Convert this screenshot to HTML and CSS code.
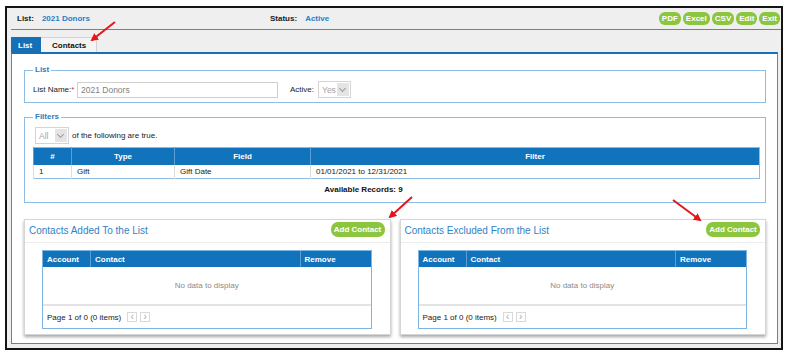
FILE: index.html
```html
<!DOCTYPE html>
<html lang="en">
<head>
    <meta charset="UTF-8">
    <title>List - 2021 Donors</title>
    <link rel="stylesheet" href="styles.css">
</head>
<body>
    <div class="frame">
        <div class="topbar">
            <div class="meta meta-list"><span class="lbl">List:</span><span class="val">2021 Donors</span></div>
            <div class="meta"><span class="lbl">Status:</span><span class="val">Active</span></div>
            <div class="actions">
                <button class="pill">PDF</button>
                <button class="pill">Excel</button>
                <button class="pill">CSV</button>
                <button class="pill">Edit</button>
                <button class="pill">Exit</button>
            </div>
        </div>

        <div class="tabs">
            <span class="tab active">List</span>
            <span class="tab">Contacts</span>
        </div>

        <div class="content">
            <fieldset class="group">
                <legend>List</legend>
                <div class="form-row">
                    <label class="field-label">List Name:<span class="req">*</span></label>
                    <input type="text" class="text-input" value="2021 Donors">
                    <label class="field-label active-label">Active:</label>
                    <div class="fake-select sel-yes"><span>Yes</span><i class="drop"></i></div>
                </div>
            </fieldset>

            <fieldset class="group filters">
                <legend>Filters</legend>
                <div class="match-row">
                    <div class="fake-select sel-all"><span>All</span><i class="drop"></i></div>
                    <span class="match-text">of the following are true.</span>
                </div>
                <table class="filter-table">
                    <thead>
                        <tr><th class="c-num">#</th><th class="c-type">Type</th><th class="c-field">Field</th><th>Filter</th></tr>
                    </thead>
                    <tbody>
                        <tr><td>1</td><td>Gift</td><td>Gift Date</td><td>01/01/2021 to 12/31/2021</td></tr>
                    </tbody>
                </table>
                <div class="records">Available Records: 9</div>
            </fieldset>

            <div class="panels">
                <section class="panel">
                    <div class="panel-head">
                        <h3 class="panel-title">Contacts Added To the List</h3>
                        <button class="pill add">Add Contact</button>
                    </div>
                    <div class="grid">
                        <table class="grid-table">
                            <thead>
                                <tr><th class="g-acc">Account</th><th>Contact</th><th class="g-rem">Remove</th></tr>
                            </thead>
                            <tbody>
                                <tr><td colspan="3" class="empty">No data to display</td></tr>
                            </tbody>
                        </table>
                        <div class="pager">Page 1 of 0 (0 items) <span class="pg">&lsaquo;</span><span class="pg">&rsaquo;</span></div>
                    </div>
                </section>
                <section class="panel">
                    <div class="panel-head">
                        <h3 class="panel-title">Contacts Excluded From the List</h3>
                        <button class="pill add">Add Contact</button>
                    </div>
                    <div class="grid">
                        <table class="grid-table">
                            <thead>
                                <tr><th class="g-acc">Account</th><th>Contact</th><th class="g-rem">Remove</th></tr>
                            </thead>
                            <tbody>
                                <tr><td colspan="3" class="empty">No data to display</td></tr>
                            </tbody>
                        </table>
                        <div class="pager">Page 1 of 0 (0 items) <span class="pg">&lsaquo;</span><span class="pg">&rsaquo;</span></div>
                    </div>
                </section>
            </div>
        </div>
    </div>

    <!-- annotation arrows drawn over the screenshot -->
    <svg class="notes" width="791" height="354" viewBox="0 0 791 354">
        <defs>
            <marker id="head" markerWidth="8" markerHeight="8" refX="6" refY="4" orient="auto" markerUnits="userSpaceOnUse">
                <path d="M0,0 L8,4 L0,8 Z" fill="#e3161d"/>
            </marker>
        </defs>
        <line x1="115" y1="22" x2="92" y2="40" stroke="#e3161d" stroke-width="2" marker-end="url(#head)"/>
        <line x1="412" y1="197" x2="390" y2="217" stroke="#e3161d" stroke-width="2" marker-end="url(#head)"/>
        <line x1="673" y1="200" x2="700" y2="220" stroke="#e3161d" stroke-width="2" marker-end="url(#head)"/>
    </svg>
</body>
</html>
```

FILE: styles.css
```css
body {
    margin: 0;
    padding: 6px 0 0 5px;
    background: #ffffff;
    font-family: "Liberation Sans", Arial, sans-serif;
    font-size: 8px;
    color: #111111;
    position: relative;
}

.frame {
    box-sizing: border-box;
    width: 778px;
    height: 344px;
    border: 2px solid #141414;
    background: #efefef;
}

/* top bar */
.topbar {
    display: flex;
    align-items: center;
    height: 21px;
    margin-left: 4px;
    padding-left: 6px;
    border-bottom: 1px solid #3d8fd2;
}
.meta {
    font-weight: bold;
}
.meta-list {
    width: 253px;
}
.meta .lbl {
    color: #1b1b1b;
    margin-right: 8px;
}
.meta .val {
    color: #2a7dc4;
}
.actions {
    margin-left: auto;
    margin-right: 1px;
    display: flex;
    gap: 2px;
}
.pill {
    font-family: "Liberation Sans", Arial, sans-serif;
    font-size: 8px;
    font-weight: bold;
    color: #ffffff;
    background: #8cc63f;
    border: none;
    border-radius: 6px;
    height: 13px;
    padding: 0 3px;
    line-height: 13px;
}

/* tabs */
.tabs {
    display: flex;
    margin: 7px 0 0 4px;
    height: 15px;
}
.tab {
    font-weight: bold;
    line-height: 15px;
    padding: 0 8px 0 11px;
    box-sizing: border-box;
    width: 56px;
    border-top: 1px solid #d2d2d2;
    border-right: 1px solid #d2d2d2;
    background: #f4f4f4;
}
.tab.active {
    width: 30px;
    padding-left: 7px;
    background: #1570b8;
    border-color: #1570b8;
    color: #ffffff;
}

/* main white box */
.content {
    box-sizing: border-box;
    width: 767px;
    height: 292px;
    margin-left: 4px;
    border: 1px solid #3d8fd2;
    border-top: 2px solid #1570b8;
    background: #ffffff;
    padding: 11px 11px 0 12px;
}

.group {
    margin: 0;
    padding: 6px 5px 4px 8px;
    border: 1px solid #8dbde6;
}
.group legend {
    font-weight: bold;
    color: #2a7dc4;
    line-height: 10px;
    padding: 0 2px;
}

.form-row {
    display: flex;
    align-items: center;
    height: 17px;
}
.field-label {
    color: #222222;
    width: 44px;
}
.req {
    color: #e02424;
}
.text-input {
    box-sizing: border-box;
    width: 201px;
    height: 16px;
    border: 1px solid #cfcfcf;
    padding: 0 3px;
    font-family: "Liberation Sans", Arial, sans-serif;
    font-size: 8.5px;
    color: #808080;
}
.active-label {
    margin: 0 4px 0 12px;
    width: 24px;
}

.fake-select {
    box-sizing: border-box;
    display: flex;
    align-items: center;
    height: 17px;
    border: 1px solid #d4d4d4;
    background: #ffffff;
    color: #a6a6a6;
    font-size: 8.5px;
    padding-left: 3px;
}
.fake-select span {
    flex: 1;
}
.fake-select .drop {
    position: relative;
    width: 12px;
    height: 13px;
    margin-right: 1px;
    background: #e4e4e4;
}
.fake-select .drop::after {
    content: "";
    position: absolute;
    left: 3px;
    top: 3px;
    width: 4px;
    height: 4px;
    border-right: 1px solid #9a9a9a;
    border-bottom: 1px solid #9a9a9a;
    transform: rotate(45deg);
}
.sel-yes {
    width: 33px;
}
.sel-all {
    width: 34px;
}

.filters {
    margin-top: 9px;
    padding-top: 5px;
    padding-bottom: 6px;
}
.match-row {
    display: flex;
    align-items: center;
    margin-left: 2px;
}
.match-text {
    margin-left: 3px;
    color: #222222;
}

.filter-table {
    width: 727px;
    margin-top: 3px;
    border-collapse: collapse;
    border: 1px solid #8dbde6;
}
.filter-table th {
    height: 17px;
    padding: 0;
    background: #1173bb;
    color: #ffffff;
    font-weight: bold;
    text-align: center;
    border-left: 1px solid #5b9fd6;
}
.filter-table td {
    height: 13px;
    padding: 0 0 0 5px;
    border-left: 1px solid #dddddd;
    color: #222222;
}
.filter-table .c-num { width: 37px; }
.filter-table .c-type { width: 102px; }
.filter-table .c-field { width: 135px; }

.records {
    margin-top: 5px;
    line-height: 12px;
    text-align: center;
    font-weight: bold;
    color: #111111;
    padding-right: 66px;
}

/* bottom panels */
.panels {
    display: flex;
    gap: 9px;
    margin-top: 16px;
}
.panel {
    box-sizing: border-box;
    flex: 1;
    height: 116px;
    background: #ffffff;
    border: 1px solid #d6d6d6;
    box-shadow: 0 2px 3px rgba(0, 0, 0, 0.35);
}
.panel-head {
    display: flex;
    justify-content: space-between;
    align-items: flex-start;
    height: 22px;
    border-bottom: 1px solid #ececec;
    padding: 0 5px 0 4px;
}
.panel-title {
    margin: 0;
    font-size: 10px;
    font-weight: normal;
    color: #2f82c6;
    line-height: 12px;
    padding-top: 5px;
}
.pill.add {
    height: 15px;
    line-height: 15px;
    border-radius: 7px;
    margin-top: 2px;
    padding: 0 3px;
    width: 54px;
}

.grid {
    margin: 7px 18px 0 17px;
    border: 1px solid #7eb4e2;
}
.grid-table {
    width: 100%;
    border-collapse: collapse;
}
.grid-table th {
    height: 16px;
    padding: 0 0 0 4px;
    background: #1173bb;
    color: #ffffff;
    font-weight: bold;
    text-align: left;
    border-left: 1px solid #5b9fd6;
}
.grid-table th:first-child {
    border-left: none;
}
.grid-table .g-acc { width: 43px; }
.grid-table .g-rem { width: 66px; }
.grid-table .empty {
    height: 37px;
    padding: 0;
    text-align: center;
    color: #8a8a8a;
}
.pager {
    display: flex;
    align-items: center;
    height: 22px;
    border-top: 2px solid #e3e3e3;
    padding-left: 4px;
    color: #222222;
}
.pg {
    box-sizing: border-box;
    width: 10px;
    height: 10px;
    margin-left: 3px;
    border: 1px solid #d9d9d9;
    color: #a8a8a8;
    font-size: 10px;
    line-height: 7px;
    text-align: center;
}
.pg:first-of-type {
    margin-left: 6px;
}

.notes {
    position: absolute;
    left: 0;
    top: 0;
    pointer-events: none;
}
```
